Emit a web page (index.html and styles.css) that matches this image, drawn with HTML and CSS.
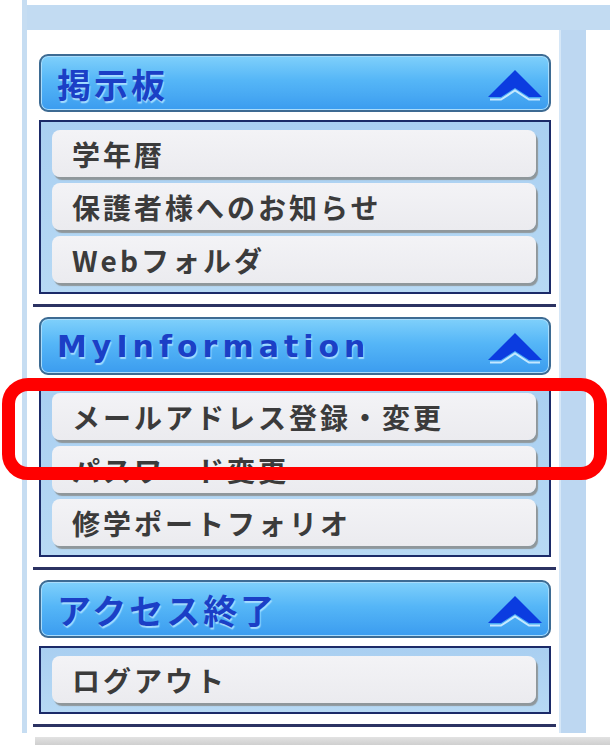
FILE: index.html
```
<!DOCTYPE html>
<html lang="ja">
<head>
    <meta charset="UTF-8">
    <title>メニュー</title>
    <link rel="stylesheet" href="styles.css">
</head>
<body>
    <div class="page">
        <div class="topbar"></div>
        <div class="layout">
            <!-- Left menu -->
            <div class="sidebar">
                <div class="menu-section">
                    <div class="menu-head">
                        <span class="head-title">掲示板</span>
                        <svg class="chevron" viewBox="0 0 56 32" width="56" height="32">
                            <polygon points="1,28 28,1 55,28 42,28 28,19 14,28" fill="#0b3ce0"/>
                            <polyline points="3,30.5 14,30.5 28,21.5 42,30.5 53,30.5" fill="none" stroke="#c4e8ff" stroke-width="2"/>
                        </svg>
                    </div>
                    <div class="menu-items">
                        <div class="menu-item">学年暦</div>
                        <div class="menu-item">保護者様へのお知らせ</div>
                        <div class="menu-item">Webフォルダ</div>
                    </div>
                    <div class="separator"></div>
                </div>

                <div class="menu-section">
                    <div class="menu-head">
                        <span class="head-title latin">MyInformation</span>
                        <svg class="chevron" viewBox="0 0 56 32" width="56" height="32">
                            <polygon points="1,28 28,1 55,28 42,28 28,19 14,28" fill="#0b3ce0"/>
                            <polyline points="3,30.5 14,30.5 28,21.5 42,30.5 53,30.5" fill="none" stroke="#c4e8ff" stroke-width="2"/>
                        </svg>
                    </div>
                    <div class="menu-items">
                        <div class="menu-item">メールアドレス登録・変更</div>
                        <div class="menu-item">パスワード変更</div>
                        <div class="menu-item">修学ポートフォリオ</div>
                    </div>
                    <div class="separator"></div>
                </div>

                <div class="menu-section">
                    <div class="menu-head">
                        <span class="head-title">アクセス終了</span>
                        <svg class="chevron" viewBox="0 0 56 32" width="56" height="32">
                            <polygon points="1,28 28,1 55,28 42,28 28,19 14,28" fill="#0b3ce0"/>
                            <polyline points="3,30.5 14,30.5 28,21.5 42,30.5 53,30.5" fill="none" stroke="#c4e8ff" stroke-width="2"/>
                        </svg>
                    </div>
                    <div class="menu-items">
                        <div class="menu-item">ログアウト</div>
                    </div>
                    <div class="separator"></div>
                </div>
            </div>
            <div class="gutter"></div>
            <div class="main"></div>
        </div>
    </div>
    <div class="hscroll"></div>

    <!-- annotation frame drawn over the menu -->
    <div class="highlight"></div>
</body>
</html>
```

FILE: styles.css
```
* {
    box-sizing: border-box;
}

body {
    margin: 0;
    background: #ffffff;
    font-family: "Noto Sans CJK JP", "Noto Sans", sans-serif;
    position: relative;
    width: 610px;
    height: 745px;
    overflow: hidden;
}

.page {
    margin-left: 22px;
    border-left: 5px solid #c6ddf2;
    height: 733px;
    display: flex;
    flex-direction: column;
}

.topbar {
    flex: none;
    margin-top: 5px;
    height: 25px;
    background: #c2dbf2;
}

.layout {
    flex: 1;
    min-height: 0;
    display: flex;
}

.sidebar {
    width: 532px;
    background: #ffffff;
    padding: 24px 3px 0 6px;
}

.gutter {
    width: 27px;
    background: #bdd7f1;
    border-left: 2px solid #d6e7f7;
}

.main {
    flex: 1;
    background: #ffffff;
}

/* Section header */
.menu-head {
    margin: 0 5px 0 6px;
    height: 58px;
    border: 2px solid #3d6b93;
    border-radius: 9px;
    background: linear-gradient(#7fd0fb, #55b6f7 45%, #3b9cef);
    box-shadow: inset 0 0 0 1px #a9dcfb;
    display: flex;
    align-items: center;
    justify-content: space-between;
    padding: 0 6px 0 16px;
}

.head-title {
    font-size: 34px;
    font-weight: 700;
    color: #1b3fc6;
    letter-spacing: 3px;
    text-shadow: 1px 2px 1px #a4dcff;
}

.head-title.latin {
    font-family: "DejaVu Sans", sans-serif;
    font-size: 30px;
    letter-spacing: 5px;
}

.chevron {
    display: block;
    margin-top: 4px;
}

/* Link list */
.menu-items {
    margin: 8px 5px 0 6px;
    border: 2px solid #1b2a68;
    background: linear-gradient(#a9cff1, #b7d9f4);
    padding: 8px 9px 9px 11px;
    display: flex;
    flex-direction: column;
    gap: 6px;
}

.menu-item {
    height: 47px;
    margin-right: 4px;
    background: linear-gradient(#f3f3f6, #ebebef);
    border-radius: 8px;
    box-shadow: 2px 3px 1px #8f979b;
    padding-left: 20px;
    display: flex;
    align-items: center;
    font-size: 28px;
    font-weight: 700;
    color: #3b3b3b;
    letter-spacing: 3px;
}

.separator {
    margin: 10px 0 10px 0;
    height: 3px;
    background: #2b3262;
}

.hscroll {
    margin: 4px 0 0 35px;
    height: 8px;
    background: linear-gradient(#e2e2e2, #cfcfcf);
}

.highlight {
    position: absolute;
    left: 2px;
    top: 378px;
    width: 605px;
    height: 102px;
    border: 13px solid #ff0000;
    border-radius: 26px;
}
```
